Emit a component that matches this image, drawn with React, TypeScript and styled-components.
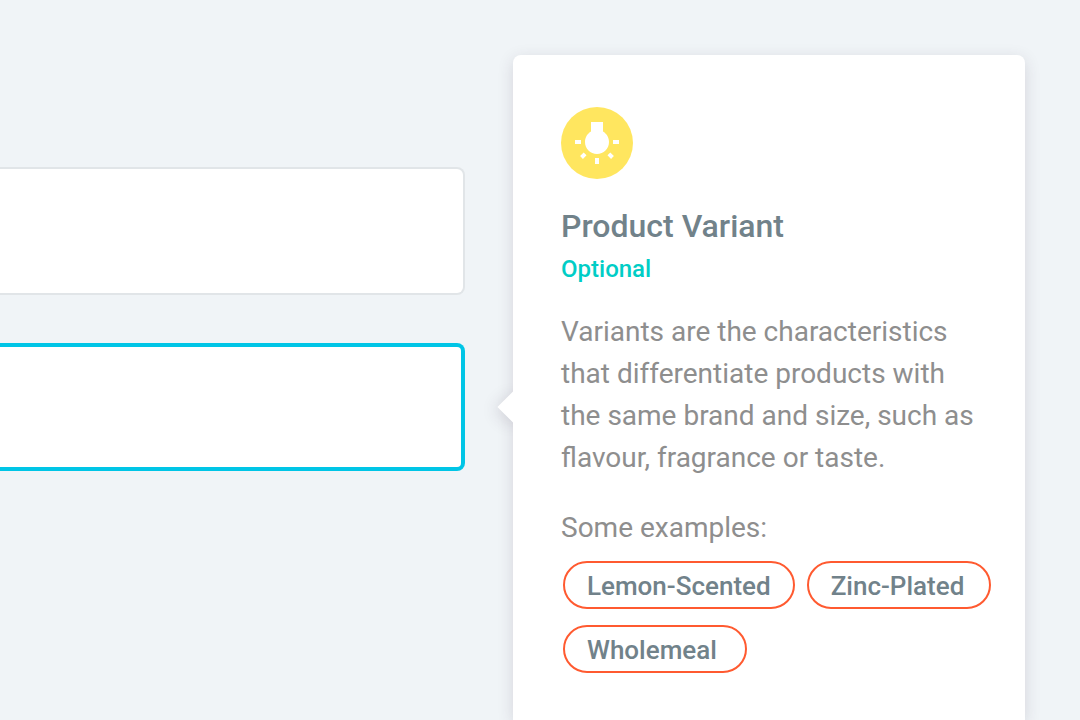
import React from "react";
import styled, { createGlobalStyle } from "styled-components";

const GlobalStyle = createGlobalStyle`
  *, *::before, *::after { box-sizing: border-box; }
  body {
    margin: 0;
    background: #f0f4f7;
    font-family: Roboto, "Liberation Sans", sans-serif;
    overflow-x: hidden;
  }
`;

const Page = styled.main`
  display: grid;
  grid-template-columns: minmax(0, 1fr) 512px;
  column-gap: 48px;
  min-height: 100vh;
  padding: 55px 55px 0 0;
`;

const Form = styled.form`
  display: flex;
  flex-direction: column;
  gap: 48px;
  padding-top: 112px;
`;

const TextField = styled.input<{ $active?: boolean }>`
  display: block;
  width: 100%;
  height: 128px;
  padding: 0 32px;
  border: ${({ $active }) => ($active ? "4px solid #00c5e6" : "2px solid #e1e5e8")};
  border-left: 0;
  border-radius: 0 8px 8px 0;
  background: #fff;
  color: #71828a;
  font: 400 28px Roboto, "Liberation Sans", sans-serif;
  outline: none;
`;

const HintCard = styled.aside`
  position: relative;
  padding: 52px 32px 20px 48px;
  border-radius: 8px 8px 0 0;
  background: #fff;
  box-shadow: 0 4px 16px rgba(60, 40, 70, 0.15);

  &::before,
  &::after {
    content: "";
    position: absolute;
  }

  &::before {
    top: 341px;
    left: -11px;
    width: 22px;
    height: 22px;
    background: #fff;
    box-shadow: 0 4px 16px rgba(60, 40, 70, 0.15);
    transform: rotate(45deg);
  }

  &::after {
    top: 320px;
    left: 0;
    width: 40px;
    height: 64px;
    background: #fff;
  }
`;

const HintBody = styled.div`
  position: relative;
  z-index: 1;
`;

const IconBadge = styled.div`
  display: flex;
  align-items: center;
  justify-content: center;
  width: 72px;
  height: 72px;
  border-radius: 50%;
  background: #ffe65f;
`;

const Title = styled.h2`
  margin: 27px 0 0;
  color: #71828a;
  font-size: 32px;
  font-weight: 500;
  line-height: 40px;
`;

const Status = styled.p`
  margin: 7px 0 0;
  color: #00cdc6;
  font-size: 24px;
  font-weight: 500;
  line-height: 32px;
`;

const Paragraph = styled.p`
  max-width: 424px;
  margin: 0 0 28px;
  color: #8e8e8e;
  font-size: 28px;
  line-height: 42px;
`;

const Description = styled.div`
  margin-top: 26px;
`;

const Examples = styled.ul`
  display: flex;
  flex-wrap: wrap;
  gap: 16px 12px;
  margin: -16px 0 0;
  padding: 0 0 0 2px;
  list-style: none;
`;

const Chip = styled.li`
  min-width: 184px;
  height: 48px;
  padding: 0 22px;
  border: 2px solid #ff5a30;
  border-radius: 24px;
  color: #71828a;
  font-size: 26px;
  font-weight: 500;
  line-height: 46px;
`;

const examples = ["Lemon-Scented", "Zinc-Plated", "Wholemeal"];

function BulbIcon() {
  return (
    <svg width="48" height="48" viewBox="0 0 24 24" fill="#fff" aria-hidden="true">
      <path d="M3.55 18.54l1.41 1.41 1.8-1.79-1.41-1.41-1.8 1.79zM11 22.45h2V19.5h-2v2.95zM4 10.5H1v2h3v-2zm11-4.19V1.5H9v4.81C7.21 7.35 6 9.28 6 11.5c0 3.31 2.69 6 6 6s6-2.69 6-6c0-2.22-1.21-4.15-3-5.19zm5 4.19v2h3v-2h-3zm-2.76 7.66l1.79 1.8 1.41-1.41-1.8-1.79-1.4 1.4z" />
    </svg>
  );
}

export default function App() {
  return (
    <>
      <GlobalStyle />
      <Page>
        <Form>
          <TextField type="text" aria-label="Product name" />
          <TextField type="text" aria-label="Product variant" $active />
        </Form>
        <HintCard>
          <HintBody>
            <IconBadge>
              <BulbIcon />
            </IconBadge>
            <Title>Product Variant</Title>
            <Status>Optional</Status>
            <Description>
              <Paragraph>
                Variants are the characteristics that differentiate products with the same brand and
                size, such as flavour, fragrance or taste.
              </Paragraph>
              <Paragraph>Some examples:</Paragraph>
            </Description>
            <Examples>
              {examples.map((name) => (
                <Chip key={name}>{name}</Chip>
              ))}
            </Examples>
          </HintBody>
        </HintCard>
      </Page>
    </>
  );
}
